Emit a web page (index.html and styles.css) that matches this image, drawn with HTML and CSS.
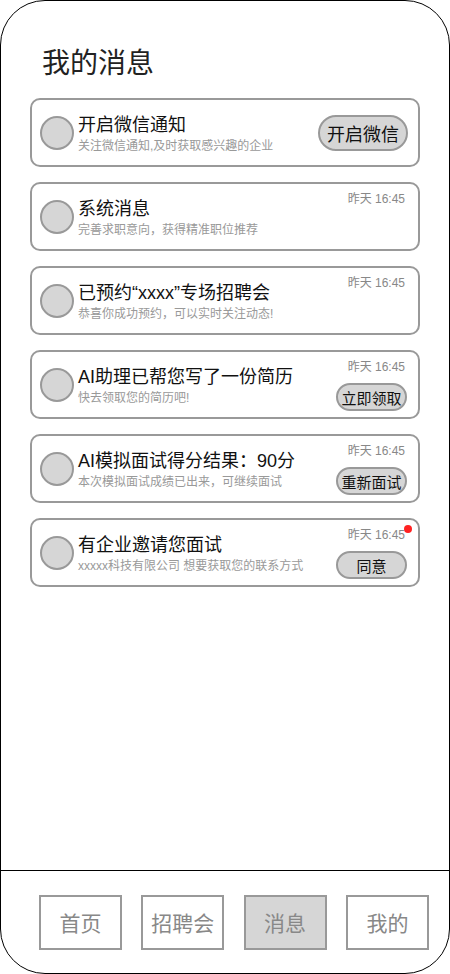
FILE: index.html
```html
<!DOCTYPE html>
<html lang="zh">
<head>
<meta charset="utf-8">
<title>我的消息</title>
<link rel="stylesheet" href="styles.css">
</head>
<body>
<div class="phone">
  <div class="main">
    <h1 class="title">我的消息</h1>
    <div class="list">
      <div class="card">
        <div class="avatar"></div>
        <div class="text">
          <div class="name">开启微信通知</div>
          <div class="desc">关注微信通知,及时获取感兴趣的企业</div>
        </div>
        <div class="side center">
          <div class="btn big">开启微信</div>
        </div>
      </div>
      <div class="card">
        <div class="avatar"></div>
        <div class="text">
          <div class="name">系统消息</div>
          <div class="desc">完善求职意向，获得精准职位推荐</div>
        </div>
        <div class="side top">
          <div class="time">昨天 16:45</div>
        </div>
      </div>
      <div class="card">
        <div class="avatar"></div>
        <div class="text">
          <div class="name">已预约“xxxx”专场招聘会</div>
          <div class="desc">恭喜你成功预约，可以实时关注动态!</div>
        </div>
        <div class="side top">
          <div class="time">昨天 16:45</div>
        </div>
      </div>
      <div class="card">
        <div class="avatar"></div>
        <div class="text">
          <div class="name">AI助理已帮您写了一份简历</div>
          <div class="desc">快去领取您的简历吧!</div>
        </div>
        <div class="side">
          <div class="time">昨天 16:45</div>
          <div class="btn">立即领取</div>
        </div>
      </div>
      <div class="card">
        <div class="avatar"></div>
        <div class="text">
          <div class="name">AI模拟面试得分结果：90分</div>
          <div class="desc">本次模拟面试成绩已出来，可继续面试</div>
        </div>
        <div class="side">
          <div class="time">昨天 16:45</div>
          <div class="btn">重新面试</div>
        </div>
      </div>
      <div class="card">
        <span class="dot"></span>
        <div class="avatar"></div>
        <div class="text">
          <div class="name">有企业邀请您面试</div>
          <div class="desc">xxxxx科技有限公司 想要获取您的联系方式</div>
        </div>
        <div class="side">
          <div class="time">昨天 16:45</div>
          <div class="btn">同意</div>
        </div>
      </div>
    </div>
  </div>
  <nav class="nav">
    <div class="tab">首页</div>
    <div class="tab">招聘会</div>
    <div class="tab active">消息</div>
    <div class="tab">我的</div>
  </nav>
</div>
</body>
</html>
```

FILE: styles.css
```css
* { box-sizing: border-box; }
html, body { margin: 0; padding: 0; background: #fff; }
body { font-family: "Liberation Sans", "Noto Sans CJK SC", sans-serif; }

.phone {
  width: 450px;
  height: 974px;
  border: 1px solid #000;
  border-radius: 45px;
  display: flex;
  flex-direction: column;
  overflow: hidden;
  background: #fff;
}

.main {
  flex: 1;
  padding: 46px 29px 0 29px;
}

.title {
  margin: 0 0 17px 12px;
  font-size: 28px;
  line-height: 34px;
  font-weight: 400;
  color: #222;
}

.list {
  display: flex;
  flex-direction: column;
  gap: 15px;
}

.card {
  position: relative;
  height: 69px;
  border: 2px solid #999;
  border-radius: 10px;
  display: flex;
  align-items: center;
  padding-left: 8px;
}

.avatar {
  flex: none;
  width: 34px;
  height: 34px;
  border: 2px solid #999;
  border-radius: 50%;
  background: #d6d6d6;
  margin-right: 4px;
}

.text {
  flex: 1;
  min-width: 0;
  padding-top: 2px;
}

.name {
  font-size: 18px;
  line-height: 22px;
  color: #111;
  white-space: nowrap;
}

.desc {
  margin-top: 2px;
  font-size: 12px;
  line-height: 16px;
  color: #999;
  white-space: nowrap;
}

.side {
  align-self: stretch;
  display: flex;
  flex-direction: column;
  justify-content: space-between;
  align-items: flex-end;
  padding: 8px 11px 6px 0;
}

.side.center { justify-content: center; padding-right: 10px; padding-top: 0; padding-bottom: 0; }
.side.top { justify-content: flex-start; }

.time {
  font-size: 12px;
  line-height: 14px;
  color: #888;
  margin-right: 2px;
  white-space: nowrap;
}

.btn {
  width: 71px;
  height: 28px;
  border: 2px solid #999;
  border-radius: 14px;
  background: #d6d6d6;
  font-size: 15px;
  color: #111;
  display: flex;
  align-items: center;
  justify-content: center;
  white-space: nowrap;
}

.btn.big {
  width: 90px;
  height: 36px;
  border-radius: 18px;
  font-size: 18px;
}

.dot {
  position: absolute;
  top: 5px;
  right: 6px;
  width: 8px;
  height: 8px;
  border-radius: 50%;
  background: #f22;
}

.nav {
  flex: none;
  height: 103px;
  border-top: 1px solid #000;
  display: flex;
  align-items: center;
  padding-left: 38px;
  gap: 19.3px;
}

.tab {
  width: 83px;
  height: 55px;
  border: 2px solid #999;
  font-size: 21px;
  color: #888;
  display: flex;
  align-items: center;
  justify-content: center;
}

.tab.active { background: #d6d6d6; }
```
